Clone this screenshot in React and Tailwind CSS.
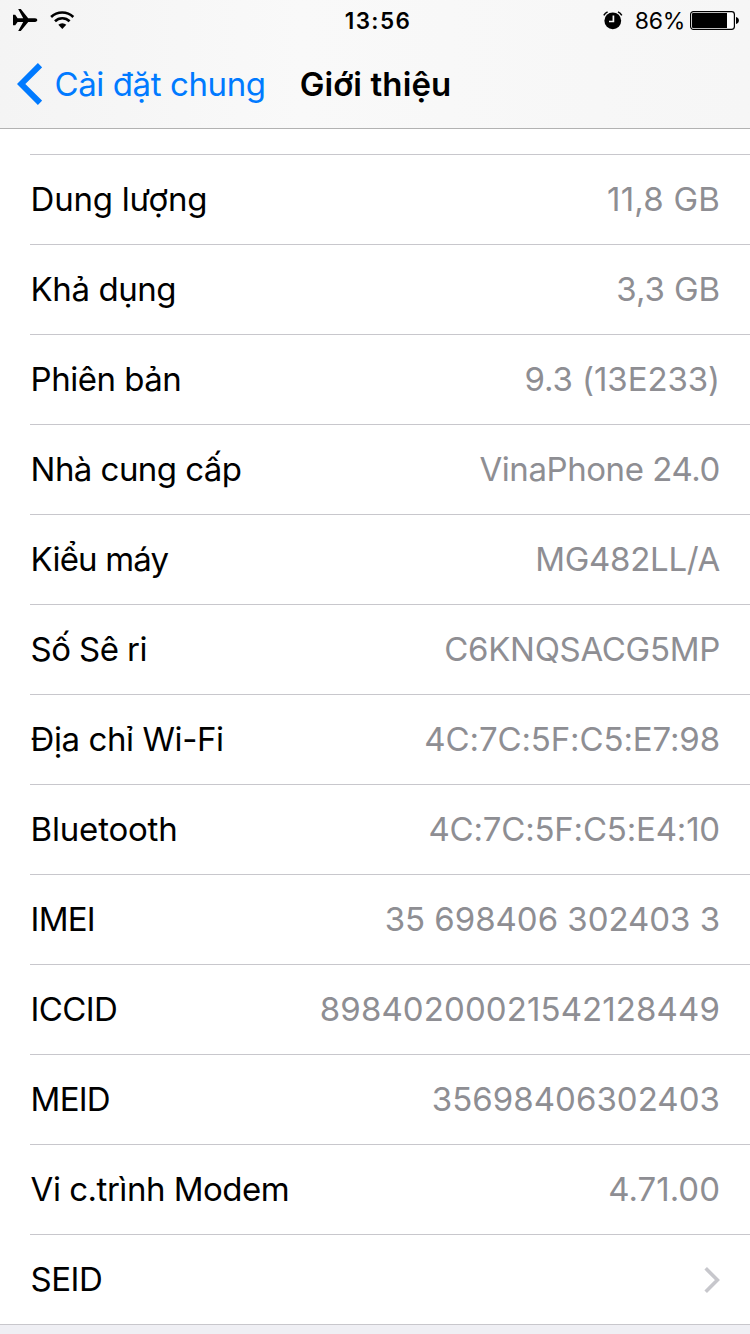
import React from 'react';

const rows = [
  { label: 'Dung lượng', ls: 'tracking-[-0.25px]', value: '11,8 GB', vs: 'tracking-[0.2px]' },
  { label: 'Khả dụng', ls: 'tracking-[-0.42px]', value: '3,3 GB', vs: 'tracking-[-0.08px]' },
  { label: 'Phiên bản', ls: 'tracking-[-0.5px]', value: '9.3 (13E233)', vs: 'tracking-[-0.08px]' },
  { label: 'Nhà cung cấp', ls: 'tracking-[-0.55px]', value: 'VinaPhone 24.0', vs: 'tracking-[-0.42px]' },
  { label: 'Kiểu máy', ls: 'tracking-[-0.82px]', value: 'MG482LL/A', vs: 'tracking-[-0.3px]' },
  { label: 'Số Sê ri', ls: 'tracking-[-0.58px]', value: 'C6KNQSACG5MP', vs: 'tracking-[-0.3px]' },
  { label: 'Địa chỉ Wi-Fi', ls: 'tracking-[-0.42px]', value: '4C:7C:5F:C5:E7:98', vs: 'tracking-[-0.12px]' },
  { label: 'Bluetooth', ls: 'tracking-[-0.2px]', value: '4C:7C:5F:C5:E4:10', vs: 'tracking-[-0.19px]' },
  { label: 'IMEI', ls: 'tracking-[-0.75px]', value: '35 698406 302403 3', vs: 'tracking-[-0.04px]' },
  { label: 'ICCID', ls: 'tracking-[-0.65px]', value: '89840200021542128449', vs: 'tracking-[0.1px]' },
  { label: 'MEID', ls: 'tracking-[-0.75px]', value: '35698406302403', vs: 'tracking-[0.04px]' },
  { label: 'Vi c.trình Modem', ls: 'tracking-[-0.48px]', value: '4.71.00', vs: 'tracking-[0px]' },
];

function Airplane() {
  return (
    <svg width="25" height="24" viewBox="0 0 25 24" fill="#000">
      <path d="M0 6.8h2.200L4.600 10.200h5.600L5.200 1h2.600l7.400 9.200h6.800c1.500 0 2.300.8 2.300 1.900s-.8 1.900-2.300 1.900h-6.800L7.800 23H5.200l5-9H4.600l-2.400 3.300H0z" />
    </svg>
  );
}

function Wifi() {
  return (
    <svg width="25" height="18" viewBox="0 0 25 18" fill="none" stroke="#000" strokeWidth="2.6">
      <path d="M1.100 6a16 16 0 0 1 22.200 0" />
      <path d="M5 10.200a10.400 10.400 0 0 1 14.600 0" />
      <path d="M12.300 18l-4-4.200a5.700 5.700 0 0 1 8 0z" fill="#000" stroke="none" />
    </svg>
  );
}

function Alarm() {
  return (
    <svg width="20" height="19" viewBox="0 0 20 19" fill="none">
      <circle cx="9.800" cy="9.800" r="8.400" fill="#000" />
      <path d="M.8 4.400A9.500 9.500 0 0 1 4.600.9M15 .9a9.500 9.500 0 0 1 3.800 3.500" stroke="#000" strokeWidth="1.500" />
      <path d="M10.400 4.400v6.100H6" stroke="#f7f7f7" strokeWidth="1.700" />
    </svg>
  );
}

function Battery() {
  return (
    <svg width="49" height="19" viewBox="0 0 49 19">
      <rect x=".6" y=".6" width="43.800" height="17.800" rx="2.800" fill="#fff" stroke="#000" strokeWidth="1.200" />
      <path d="M3 2h34v15H3a1 1 0 0 1-1-1V3a1 1 0 0 1 1-1z" fill="#000" />
      <path d="M46 6c1.800.4 2.900 1.800 2.900 3.500s-1.100 3.100-2.900 3.500z" fill="#000" />
    </svg>
  );
}

export default function App() {
  return (
    <div className="flex h-[1334px] w-[750px] flex-col overflow-hidden bg-[#efeff4] font-['Inter','Liberation_Sans',sans-serif] text-[33px] whitespace-nowrap text-black">
      <header className="h-[129px] shrink-0 border-b border-[#b2b2b2] bg-linear-to-r from-[#f4f4f4] via-[#f9f9f9] via-40% to-[#f6f6f6]">
        <div className="grid h-10 grid-cols-[1fr_auto_1fr] items-center pr-[11px] pl-[13px]">
          <div className="flex items-center gap-3">
            <Airplane />
            <Wifi />
          </div>
          <span className="pt-px pl-[4px] text-[22.5px] leading-[38px] font-semibold tracking-[1.4px]">13:56</span>
          <div className="flex items-center justify-end">
            <Alarm />
            <span className="pt-0.5 pr-[5px] pl-[12px] text-[23px] leading-[38px] tracking-[-0.3px]">86%</span>
            <Battery />
          </div>
        </div>
        <div className="grid h-[88px] grid-cols-[1fr_auto_1fr] items-center">
          <div className="flex items-center pl-[17px] text-[#007aff]">
            <svg width="25" height="42" viewBox="0 0 25 42" fill="none" stroke="#007aff" strokeWidth="6">
              <path d="M23 2.200L4.200 21L23 39.800" />
            </svg>
            <span className="pt-0.5 pl-[12.500px] tracking-[-0.4px]">Cài đặt chung</span>
          </div>
          <h1 className="pt-0.5 pl-px font-semibold tracking-[0.1px]">Giới thiệu</h1>
          <div />
        </div>
      </header>
      <main className="h-[1196px] shrink-0 border-b border-[#c8c7cc] bg-white pt-[25px]">
        {rows.map((r) => (
          <div key={r.label} className="ml-[30px] flex h-[90px] items-center justify-between border-t border-[#c8c7cc] pr-[30px] pl-[0.6px]">
            <span className={r.ls}>{r.label}</span>
            <span className={`text-[#8e8e93] ${r.vs}`}>{r.value}</span>
          </div>
        ))}
        <div className="ml-[30px] flex h-[90px] items-center justify-between border-t border-[#c8c7cc] pr-[30px] pl-[0.6px]">
          <span className="tracking-[-0.5px]">SEID</span>
          <svg width="16" height="26" viewBox="0 0 16 26" fill="none" stroke="#c7c7cc" strokeWidth="3.600">
            <path d="M1.700 1.300L13.400 13L1.700 24.700" />
          </svg>
        </div>
      </main>
    </div>
  );
}
